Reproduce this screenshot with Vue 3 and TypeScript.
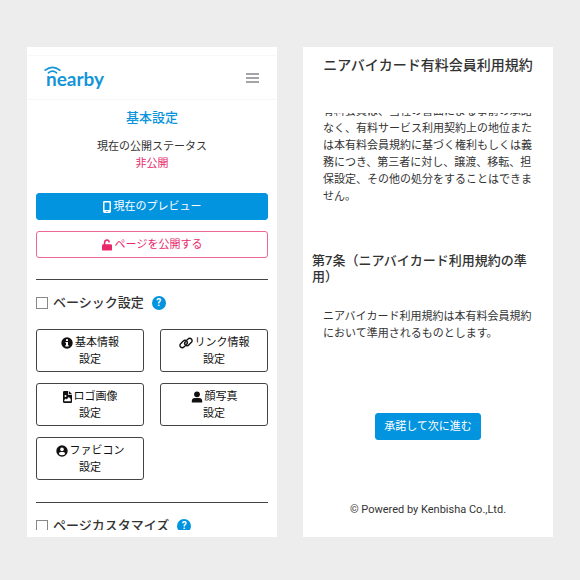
<script setup lang="ts">
import { ref } from 'vue'

type IconName = 'info' | 'link' | 'file' | 'user' | 'avatar'

interface SettingCard {
  icon: IconName
  title: string
}

const cards: SettingCard[] = [
  { icon: 'info', title: '基本情報' },
  { icon: 'link', title: 'リンク情報' },
  { icon: 'file', title: 'ロゴ画像' },
  { icon: 'user', title: '顔写真' },
  { icon: 'avatar', title: 'ファビコン' },
]

const basicOpen = ref(false)
const customOpen = ref(false)
</script>

<template>
  <div class="page">
    <section class="panel">
      <div class="screen">
        <header class="bar">
          <a class="logo" href="#">
            <svg class="waves" viewBox="0 0 18 9" aria-hidden="true">
              <path d="M1.2 4.2Q8.5 -1.6 15.8 4.2" />
              <path d="M4.4 6.8Q8.5 3.4 12.6 6.8" />
            </svg>
            <span class="logo-text">nearby</span>
          </a>
          <button class="menu" type="button" aria-label="メニュー">
            <i></i><i></i><i></i>
          </button>
        </header>

        <main class="settings">
          <h1 class="title">基本設定</h1>
          <p class="status">現在の公開ステータス<br /><span class="private">非公開</span></p>

          <div class="actions">
            <button class="btn primary" type="button">
              <svg class="icon phone" viewBox="0 0 8 12" aria-hidden="true">
                <path fill-rule="evenodd" d="M1.4 0h5.2A1.4 1.4 0 0 1 8 1.4v9.2A1.4 1.4 0 0 1 6.6 12H1.4A1.4 1.4 0 0 1 0 10.6V1.4A1.4 1.4 0 0 1 1.4 0zM1.5 1.5v7.5h5V1.5zM3.4 10v1h1.2v-1z" />
              </svg>
              現在のプレビュー
            </button>
            <button class="btn outline" type="button">
              <svg class="icon lock" viewBox="0 0 10 12" aria-hidden="true">
                <path d="M2.6 6V3.4a2.3 2.3 0 0 1 4.5-.7" fill="none" stroke="currentColor" stroke-width="1.6" stroke-linecap="round" />
                <rect y="5.2" width="10" height="6.4" rx="1.2" />
              </svg>
              ページを公開する
            </button>
          </div>

          <hr />
          <div class="group">
            <input id="basic" v-model="basicOpen" type="checkbox" />
            <label for="basic">ベーシック設定</label>
            <button class="help" type="button" aria-label="ヘルプ">?</button>
          </div>

          <div class="cards">
            <button v-for="card in cards" :key="card.title" class="card" type="button">
              <span class="card-title">
                <svg v-if="card.icon === 'info'" class="icon" viewBox="0 0 12 12" aria-hidden="true">
                  <circle cx="6" cy="6" r="5.7" />
                  <path class="cut" d="M5 2.2h2v1.7H5zM4.4 4.9H7v3.3h.7v1.2H4.3V8.2H5V6.1h-.6z" />
                </svg>
                <svg v-else-if="card.icon === 'link'" class="icon wide" viewBox="0 0 14 12" aria-hidden="true">
                  <g fill="none" stroke="currentColor" stroke-width="1.4" stroke-linecap="round">
                    <path d="M6.1 8.9 4.9 10a2.3 2.3 0 0 1-3.3-3.3L4.3 4a2.3 2.3 0 0 1 3.3 3.3" />
                    <path d="M7.9 3.1 9.1 2a2.3 2.3 0 0 1 3.3 3.3L9.7 8a2.3 2.3 0 0 1-3.3-3.3" />
                  </g>
                </svg>
                <svg v-else-if="card.icon === 'file'" class="icon narrow" viewBox="0 0 9 12" aria-hidden="true">
                  <path d="M1.2 0H5v3.7h4v7.1A1.2 1.2 0 0 1 7.8 12H1.2A1.2 1.2 0 0 1 0 10.8V1.2A1.2 1.2 0 0 1 1.2 0zM5.8 0 9 3H5.8z" />
                  <circle class="cut" cx="2.5" cy="5" r="1" />
                  <path class="cut" d="M1.3 10.2V9l1.5-1.5.9.9L5.8 6l1.9 2.1v2.1z" />
                </svg>
                <svg v-else-if="card.icon === 'user'" class="icon" viewBox="0 0 12 12" aria-hidden="true">
                  <circle cx="6" cy="3.3" r="2.9" />
                  <path d="M.8 11.5V10A3.1 3.1 0 0 1 3.9 7h4.2a3.1 3.1 0 0 1 3.1 3v1.5z" />
                </svg>
                <svg v-else class="icon" viewBox="0 0 12 12" aria-hidden="true">
                  <circle cx="6" cy="6" r="5.7" />
                  <circle class="cut" cx="6" cy="4.4" r="1.8" />
                  <path class="cut" d="M2.8 9a2.3 2.3 0 0 1 2.1-2.1h2.2A2.3 2.3 0 0 1 9.2 9a4.6 4.6 0 0 1-6.4 0z" />
                </svg>
                {{ card.title }}
              </span>
              <span>設定</span>
            </button>
          </div>

          <hr />
          <div class="group">
            <input id="custom" v-model="customOpen" type="checkbox" />
            <label for="custom">ページカスタマイズ</label>
            <button class="help" type="button" aria-label="ヘルプ">?</button>
          </div>
        </main>
      </div>
    </section>

    <section class="panel">
      <div class="terms">
        <h2 class="terms-title">ニアバイカード有料会員利用規約</h2>
        <div class="scroll">
          <p>有料会員は、当社の書面による事前の承諾なく、有料サービス利用契約上の地位または本有料会員規約に基づく権利もしくは義務につき、第三者に対し、譲渡、移転、担保設定、その他の処分をすることはできません。</p>
        </div>
        <h3 class="article">第7条（ニアバイカード利用規約の準用）</h3>
        <p class="body">ニアバイカード利用規約は本有料会員規約において準用されるものとします。</p>
        <button class="btn primary agree" type="button">承諾して次に進む</button>
        <footer class="footer">© Powered by Kenbisha Co.,Ltd.</footer>
      </div>
    </section>
  </div>
</template>

<style>
body {
  margin: 0;
  background: #ededed;
}
</style>

<style scoped>
* {
  box-sizing: border-box;
}

.page {
  display: grid;
  grid-template-columns: 1fr 1fr;
  gap: 26px;
  height: 100vh;
  padding: 47px 27px 43px;
  font-family: Roboto, "Noto Sans CJK JP", sans-serif;
  font-size: 11px;
  line-height: 17px;
  color: #333;
}

.panel {
  min-width: 0;
  min-height: 0;
  padding: 8px 0 7px;
  overflow: hidden;
  background: #fff;
}

.screen {
  height: 100%;
  overflow: hidden;
  border-top: 1px solid #f8f8f8;
}

h1,
h2,
h3,
p {
  margin: 0;
}

button {
  font: inherit;
  cursor: pointer;
}

.bar {
  display: flex;
  align-items: center;
  justify-content: space-between;
  height: 44px;
  padding: 0 18px 0 17px;
  border-bottom: 1px solid #f6f6f6;
}

.logo {
  display: flex;
  flex-direction: column;
  color: #1495d8;
  text-decoration: none;
}

.waves {
  width: 18px;
  height: 9px;
  fill: none;
  stroke: currentColor;
  stroke-width: 1.7;
  stroke-linecap: round;
}

.logo-text {
  margin-top: -6px;
  padding-left: 2px;
  font-family: Lato, sans-serif;
  font-size: 19px;
  font-weight: 700;
  line-height: 20px;
}

.menu {
  display: grid;
  gap: 2px;
  width: 13px;
  padding: 0;
  border: 0;
  background: none;
}

.menu i {
  height: 2px;
  background: #a4a4a8;
}

.settings {
  padding: 9px 9px 0;
}

.title {
  font-size: 13px;
  font-weight: 500;
  line-height: 18px;
  text-align: center;
  color: #0894dc;
}

.status {
  margin-top: 11px;
  text-align: center;
}

.private {
  color: #e9286b;
}

.actions {
  display: grid;
  gap: 11px;
  margin: 21px 0;
}

.btn {
  display: flex;
  align-items: center;
  justify-content: center;
  gap: 3px;
  height: 27px;
  padding: 0 8px;
  border: 1px solid #0394e0;
  border-radius: 3px;
}

.primary {
  background: #0394e0;
  color: #fff;
}

.outline {
  border-color: #ee6797;
  background: #fff;
  color: #e9286b;
}

.icon {
  flex: none;
  width: 12px;
  height: 12px;
  fill: currentColor;
}

.phone {
  width: 8px;
}

.lock {
  width: 10px;
}

.wide {
  width: 14px;
}

.narrow {
  width: 9px;
}

.cut {
  fill: #fff;
}

hr {
  height: 1px;
  margin: 0;
  border: 0;
  background: #444;
}

.group {
  display: flex;
  align-items: center;
  padding-top: 14px;
  font-size: 13px;
  font-weight: 500;
  line-height: 18px;
}

.group input {
  width: 12px;
  height: 12px;
  margin: 0 5px 0 0;
  appearance: none;
  border: 1px solid #888;
  background: #fff;
}

.group input:checked {
  background: #0394e0;
}

.help {
  width: 14px;
  height: 14px;
  margin-left: 8px;
  padding: 0;
  border: 0;
  border-radius: 50%;
  background: #0394e0;
  color: #fff;
  font-size: 10px;
  font-weight: 700;
  line-height: 14px;
}

.cards {
  display: grid;
  grid-template-columns: 1fr 1fr;
  gap: 11px 16px;
  margin: 17px 0 22px;
}

.card {
  display: flex;
  flex-direction: column;
  align-items: center;
  height: 43px;
  padding: 4px 0 3px;
  border: 1px solid #444;
  border-radius: 3px;
  background: #fff;
  color: #111;
}

.card-title {
  display: flex;
  align-items: center;
  gap: 2px;
}

.terms {
  display: flex;
  flex-direction: column;
  height: 100%;
}

.terms-title {
  font-size: 14px;
  font-weight: 500;
  line-height: 20px;
  text-align: center;
}

.scroll {
  display: flex;
  flex-direction: column;
  justify-content: flex-end;
  height: 92px;
  margin-top: 38px;
  padding: 0 20px;
  overflow: hidden;
}

.article {
  margin-top: 48px;
  padding: 0 9px;
  font-size: 13px;
  font-weight: 500;
  line-height: 16px;
}

.body {
  margin-top: 23px;
  padding: 0 20px;
}

.agree {
  align-self: center;
  margin-top: 71px;
}

.footer {
  margin-top: 61px;
  text-align: center;
}
</style>
